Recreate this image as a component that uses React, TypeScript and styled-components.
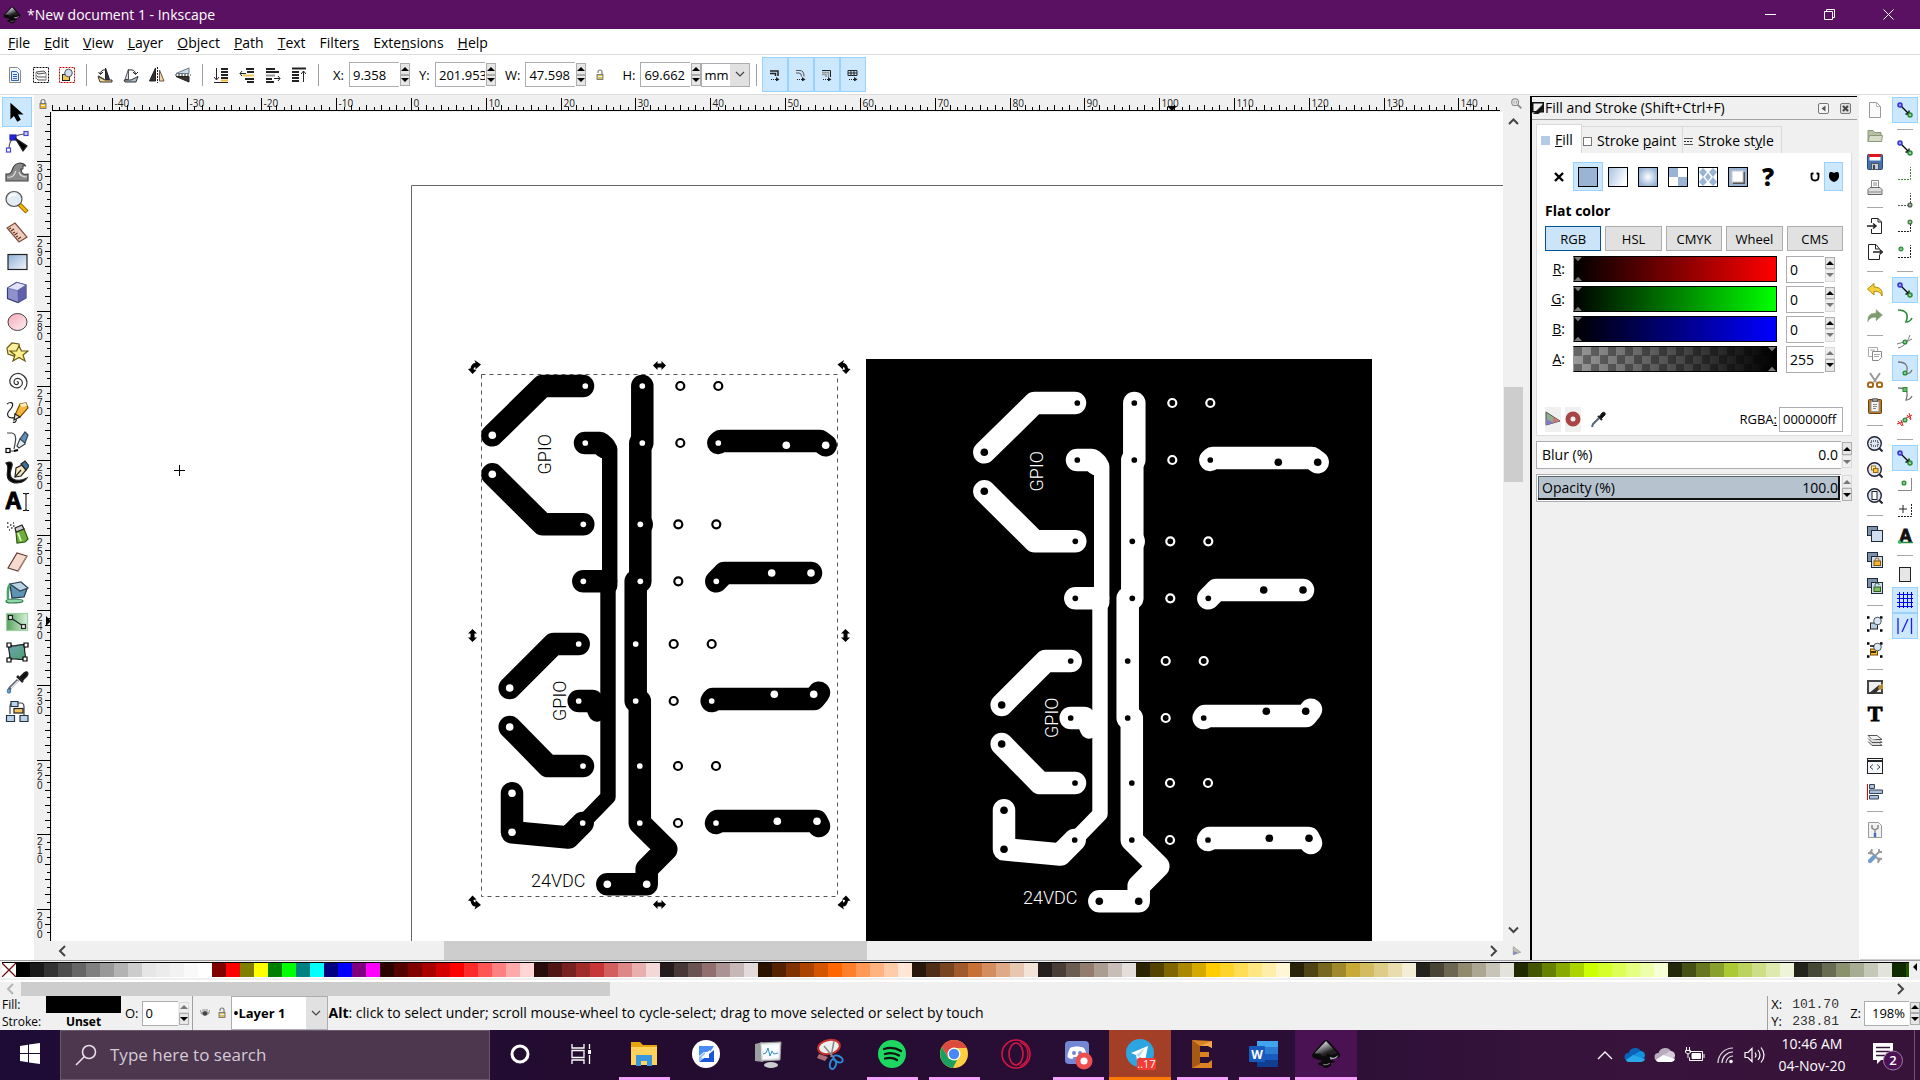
import React from "react";
import styled, { createGlobalStyle, css } from "styled-components";

const Global = createGlobalStyle`
  *, *::before, *::after { box-sizing: border-box; }
  html, body { margin: 0; padding: 0; }
  body { background: #f0f0f0; color: #000; font: 14px/18px "Open Sans", "Noto Sans", sans-serif; overflow: hidden; }
  button, input, select { font: inherit; color: inherit; margin: 0; padding: 0; border: 0; border-radius: 0; background: none; outline: none; }
  svg { display: block; flex: none; }
`;

/* ---------- shared pieces ---------- */

const Shell = styled.div`
  display: flex;
  flex-direction: column;
  height: 100vh;
`;

const IconButton = styled.button<{ $w?: number; $h?: number; $on?: boolean }>`
  display: flex;
  align-items: center;
  justify-content: center;
  flex: none;
  width: ${(p) => p.$w ?? 26}px;
  height: ${(p) => p.$h ?? 26}px;
  ${(p) => p.$on && css`background: #cce8ff; border: 1px solid #99d1ff;`}
`;

const VSep = styled.span`
  flex: none;
  width: 12px;
  height: 22px;
  background: linear-gradient(#a0a0a0, #a0a0a0) center / 1px 100% no-repeat;
`;

const HSep = styled.span`
  flex: none;
  width: 16px;
  height: 12px;
  background: linear-gradient(#a8a8a8, #a8a8a8) center / 100% 1px no-repeat;
`;

const Box = styled.span<{ $w?: number; $h: number }>`
  display: flex;
  gap: 1px;
  width: ${(p) => (p.$w ? p.$w + "px" : "auto")};
  height: ${(p) => p.$h}px;
`;

const TextInput = styled.input<{ $pad?: number }>`
  flex: 1;
  min-width: 0;
  width: 0;
  height: 100%;
  padding-left: ${(p) => p.$pad ?? 3}px;
  background: #fff;
  border: 1px solid #abadb3;
  border-right-width: 0;
`;

const HexInput = styled(TextInput)` border-right-width: 1px; `;

const Steps = styled.span`
  display: flex;
  flex-direction: column;
  flex: none;
  width: 10px;
  padding: 1px 0;
`;

const Step = styled.button<{ $dim?: boolean }>`
  flex: 1;
  display: flex;
  align-items: center;
  justify-content: center;
  border: 1px solid ${(p) => (p.$dim ? "#d9d9d9" : "#adadad")};
  background: ${(p) => (p.$dim ? "#efefef" : "#e6e6e6")};
  color: ${(p) => (p.$dim ? "#777" : "#000")};
`;

const Stepper = ({ upDim, downDim }: { upDim?: boolean; downDim?: boolean }) => (
  <Steps>
    <Step aria-label="Increase" $dim={upDim}>
      <svg width="8" height="4" viewBox="0 0 8 4"><path d="M0 4L4 0l4 4z" fill="currentColor" /></svg>
    </Step>
    <Step aria-label="Decrease" $dim={downDim}>
      <svg width="8" height="4" viewBox="0 0 8 4"><path d="M0 0h8L4 4z" fill="currentColor" /></svg>
    </Step>
  </Steps>
);

const Picker = styled.span<{ $w: number; $h: number; $arrow: number; $bold?: boolean }>`
  display: grid;
  grid-template-columns: 1fr ${(p) => p.$arrow}px;
  width: ${(p) => p.$w}px;
  height: ${(p) => p.$h}px;
  border: 1px solid #abadb3;
  background: linear-gradient(#e1e1e1, #e1e1e1) right / ${(p) => p.$arrow}px 100% no-repeat #fff;
  font-size: 13px;
  font-weight: ${(p) => (p.$bold ? 700 : 400)};
  select { grid-area: 1 / 1 / 2 / 3; appearance: none; padding-left: 2px; }
  svg { grid-area: 1 / 2; place-self: center; pointer-events: none; }
`;

const Chevron = ({ d = "M1 1l4 4 4-4", w = 10, h = 7, c = "#444", s = 1.2 }: { d?: string; w?: number; h?: number; c?: string; s?: number }) => (
  <svg width={w} height={h} viewBox={`0 0 ${w} ${h}`} fill="none" stroke={c} strokeWidth={s}><path d={d} /></svg>
);

const LEFT = "M7 1L2 6l5 5";
const RIGHT = "M2 1l5 5-5 5";

/* ---------- title and menu ---------- */

const TitleBar = styled.header`
  display: flex;
  align-items: center;
  flex: none;
  height: 29px;
  padding: 0 2px 0 3px;
  background: #5b1162;
  color: #fff;
  h1 { flex: 1; margin: 0 0 0 6px; font-size: 14px; line-height: 18px; font-weight: 400; }
`;

const MenuBar = styled.nav`
  display: flex;
  gap: 14px;
  flex: none;
  align-items: center;
  height: 26px;
  padding: 2px 0 0 8px;
  background: #fff;
  border-bottom: 1px solid #dcdcdc;
`;

const ToolBar = styled.div`
  display: flex;
  align-items: center;
  flex: none;
  height: 40px;
  padding-left: 2px;
  background: #fff;
  border-bottom: 1px solid #dcdcdc;
`;

const Field = styled.div`
  display: flex;
  align-items: center;
  gap: 5px;
  margin-left: 9px;
  font-size: 13px;
  label { min-width: 11px; }
`;

const InkLogo = ({ size, id }: { size: number; id: string }) => (
  <svg width={size} height={size} viewBox="0 0 32 32">
    <defs>
      <linearGradient id={id} x1="0" y1="0" x2="0.6" y2="1">
        <stop offset="0" stopColor="#fff" /><stop offset=".4" stopColor="#a4a7ac" /><stop offset=".8" stopColor="#222" />
      </linearGradient>
    </defs>
    <path d="M16 1c1.500 0 2.500.8 3.500 2l10 11c2.500 3 2 5-1 6-2 .8-6 .6-6 2 0 1.200 3 1 3 2s-2 1-4 1.500c-1 .5 1 2-1 3.500-2 1.200-3 2-5 2s-2-1.500-4-2.500c-1.500-.8-4-.5-4-2s4-1.500 4-3-6-1.500-8-3c-3-1.500-3-4-.5-6.500l10-11C14 1.800 14.800 1 16 1z" fill="#0b0b0b" />
    <path d="M16 2L4 15c3 2 5-1 7 2s4 1 6-.5 5 2 11-1.500z" fill={`url(#${id})`} />
    <path d="M20 19c3 2 6 1 9-2-1 4-5 4-8 5z" fill="#b5bcc4" />
    <path d="M13 27c2 1 4 .5 7-1" stroke="#999" fill="none" />
  </svg>
);

const menus: [string, string, string][] = [
  ["", "F", "ile"], ["", "E", "dit"], ["", "V", "iew"], ["", "L", "ayer"], ["", "O", "bject"],
  ["", "P", "ath"], ["", "T", "ext"], ["Filter", "s", ""], ["Exte", "n", "sions"], ["", "H", "elp"],
];

const WinButton = styled(IconButton)` width: 59px; height: 29px; `;

/* ---------- option bar icons ---------- */

const S = ({ children, s = 16, v = 16 }: { children: React.ReactNode; s?: number; v?: number }) => (
  <svg width={s} height={s} viewBox={`0 0 ${v} ${v}`} fill="none" stroke="#222" strokeWidth="1">{children}</svg>
);

const TurnLeft = () => (
  <S><path d="M8.500 12.500V1l4 11.500z" fill="#333" /><path d="M1.500 9l6 3.500" stroke="#333" /><path d="M1 9.500L8 13h7v2H3z" fill="#f6d98a" stroke="#333" /><path d="M9 3Q4 2 3.500 7M1.500 5l2 2.500L6 5" /></S>
);
const TurnRight = () => (
  <S><path d="M2 12.500L5.500 2v10.500z" fill="#d5dfe9" stroke="#555" /><path d="M1 13h7l7-3.500L13 15H2z" fill="#aebfce" stroke="#333" /><path d="M6 3q6-1 6.500 4M10 5l2.500 2.500L15 5" /></S>
);

const Lines = ({ kind }: { kind: number }) => (
  <S>
    {kind === 0 && <><path d="M3.500 1v11M1 10l2.500 3L6 10M1 15.500h14" /><path d="M8 2h7M8 5h7M8 8h7M8 11h7" strokeWidth="2" /><path d="M8 13.500h7" stroke="#f0b93a" strokeWidth="2" /></>}
    {kind === 1 && <><path d="M7 2h8M8 5h7M6 12h9M8 15h7" strokeWidth="2" /><path d="M4 8.500h11" stroke="#f0c35a" strokeWidth="2" /><path d="M1 6.500h6M3 4L1 6.500 3 9" /></>}
    {kind === 2 && <><path d="M1 2h9M1 5h13M1 12h6M1 15h8" strokeWidth="2" /><path d="M1 8.500h9" stroke="#999" strokeWidth="2" /><path d="M9 11.500h6M13 9l2 2.500L13 14" /></>}
    {kind === 3 && <><path d="M1 1.500h14" strokeWidth="2" /><path d="M1 5h7M1 8h7M1 11h7M1 14h7" strokeWidth="2" /><path d="M12.500 15V4M10 7l2.500-3L15 7" /></>}
  </S>
);

const PaperLines = () => (
  <S><path d="M2.500.5h8l3 3v12h-11z" fill="#f4f7fb" stroke="#888" /><path d="M4.500 4.500h5l2 2v7h-7z" fill="#dfe9f6" stroke="#3465a4" /><path d="M6 7.500h4M6 9.500h4M6 11.500h4" stroke="#3465a4" /></S>
);

const SelectAllLayers = () => (
  <S><rect x=".5" y=".5" width="15" height="15" stroke="#000" strokeDasharray="2 1" /><path d="M3 5l8-1 2 2-8 1zM3 8l2 2h8M3 11l2 2h8" stroke="#555" fill="#eee" /><path d="M3 5v7M13 6v7" stroke="#888" /></S>
);

const SelectTouch = () => (
  <S><rect x=".5" y=".5" width="15" height="15" stroke="#c00" strokeDasharray="2 1" /><rect x="3.500" y="7.500" width="7" height="6" fill="#f3c64c" /><circle cx="9.500" cy="6" r="3.800" fill="#cfdff0" stroke="#555" /></S>
);

const Padlock = ({ open, c = "#d8c25c" }: { open?: boolean; c?: string }) => (
  <svg width="12" height="12" viewBox="0 0 12 12"><path d={open ? "M4 4V3a2 2 0 0 1 4 0v3" : "M4 6V3.500a2 2 0 0 1 4 0V6"} fill="none" stroke="#777" strokeWidth="1.200" /><rect x="3" y="5.500" width="6" height="5" fill={c} stroke="#666" strokeWidth=".8" /><path d="M4 7.500h4" stroke="#eee" /></svg>
);

const Affect = ({ kind }: { kind: number }) => (
  <svg width="12" height="12" viewBox="0 0 12 12" fill="none" stroke="#222">
    {kind === 0 && <path d="M1 2h8v5M1 4.500h5.500V7" strokeWidth="1.500" />}
    {kind === 1 && <path d="M1 1.500h4q4 0 4 6M1 4h3q2.500 0 2.500 3.500" stroke="#555" />}
    {kind === 2 && <><path d="M1 1.500h8.500V8" /><path d="M1 3.500h6.500V8M1 5.500h4V8" stroke="#999" strokeWidth="1.500" /></>}
    {kind === 3 && <path d="M1 1.500h9v5H1zM1 4h9M4 1v6M7 1v6" />}
    <path d="M2 10.500h6" strokeDasharray="1 1" /><path d="M7 8l3.500 2.500L7 12.500z" fill="#222" stroke="none" />
  </svg>
);

/* ---------- tool box ---------- */

const ToolBox = styled.div`
  display: flex;
  flex-direction: column;
  align-items: center;
  flex: none;
  width: 34px;
  padding-top: 2px;
  background: #fff;
`;

const T = ({ children }: { children: React.ReactNode }) => (
  <svg width="24" height="24" viewBox="0 0 24 24" fill="none" stroke="#222" strokeWidth="1.200">{children}</svg>
);

const tools: [string, React.ReactNode][] = [
  ["Select", <T key="t"><path d="M6 4v14l3-3 3.500 6 2.500-1.500L12 14h5z" fill="#000" stroke="#000" /></T>],
  ["Edit nodes", <T key="t"><path d="M4 19C4 9 10 4 21 4" stroke="#555" /><rect x="1.500" y="18" width="4" height="4" fill="#fff" stroke="#44c" /><rect x="19" y="1.500" width="4" height="4" fill="#ccf" stroke="#44c" /><rect x="5" y="5" width="6" height="5" fill="#22e" stroke="#22a" /><path d="M10 8l12 8-4 5z" fill="#000" /></T>],
  ["Tweak", <T key="t"><path d="M1 21V14c5 1 6-3 7-6 2-5 9-7 13-2-2-1-4 0-3 2 0 1-1 1.500-2 1 0 5 3 6 7 5v7z" fill="#8a8a8a" stroke="#444" /><path d="M2 17c5 1 7-1 9-6M14 12c1 4 4 5 8 5" stroke="#ddd" /></T>],
  ["Zoom", <T key="t"><path d="M14 14l8 8" stroke="#8a5a00" strokeWidth="4.500" /><path d="M14.500 14.500l7 7" stroke="#f5b800" strokeWidth="2.500" /><ellipse cx="9" cy="9" rx="8" ry="7.500" fill="#e2ecf5" stroke="#555" /><path d="M4 8c1-3 4-4 7-3" stroke="#fff" strokeWidth="2" /></T>],
  ["Measure", <T key="t"><path d="M2 8l8-5 12 14-8 5z" fill="#f0cdbd" stroke="#7c4b3a" /><path d="M4 9l2-1M6 11l3-2M8 13l2-1M9.500 15l3-2M11 17l2-1M13 19l3-2" stroke="#5a2d1e" /></T>],
  ["Rectangle", <T key="t"><defs><linearGradient id="rg" x2="1" y2="1"><stop stopColor="#8fb0d6" /><stop offset="1" stopColor="#f2f7fc" /></linearGradient></defs><rect x="3" y="4.500" width="19" height="15" fill="url(#rg)" /></T>],
  ["3D box", <T key="t"><path d="M2.500 8l9-5.500L21 5v13l-8 4.500-10.500-4z" fill="#8f91cf" stroke="#333b78" /><path d="M2.500 8l10 2.500L21 5l-9-2.500z" fill="#e2e3f8" stroke="#555aa0" strokeWidth=".6" /><path d="M12.500 10.500L21 5v13l-8 4.500z" fill="#5d60a8" stroke="none" /></T>],
  ["Ellipse", <T key="t"><defs><linearGradient id="eg" x2="1" y2="1"><stop stopColor="#f7a8b8" /><stop offset="1" stopColor="#fdf0f2" /></linearGradient></defs><ellipse cx="12.500" cy="12" rx="9.500" ry="8.500" fill="url(#eg)" stroke="#444" strokeWidth="1" /></T>],
  ["Star", <T key="t"><path d="M2 8l5-5 7 1 1 7-6 5-6-2z" fill="#fbf0a0" stroke="#6b5a10" /><path d="M14 6l2.500 5H23l-5 4 2 6-6-3.500L8 21l2-6-5-4h6.500z" fill="#fdf08f" stroke="#6b5a10" /></T>],
  ["Spiral", <T key="t"><path d="M12 12c1-1 2 1 1 2s-4 1-4-2 3-4.500 6-3 3.500 6 0 8-9 0-10-4 2-9 7-9.500 10 4 10 9-1 5-3 7" stroke="#333" /></T>],
  ["Pencil", <T key="t"><path d="M2 4c4-3 7-1 5 3s-6 5-4 9 7 0 8 3-2 4-3 3" /><path d="M10 15l5-11 6-1 2 5-8 9-5 1z" fill="#f5b63a" stroke="#7a4a00" /><path d="M10 14l5 3-6 3z" fill="#fbe6c5" /><path d="M15 4l6-1 1 3-5 1z" fill="#fff4c2" stroke="none" /></T>],
  ["Bezier", <T key="t"><path d="M2 3h5c5 1 4 7 2 16M4 21h6" stroke="#444" /><rect x="1" y="18.500" width="4" height="4" fill="#fff" stroke="#000" /><path d="M9 21l4-1" stroke="#000" strokeWidth="2" /><path d="M12 16l3-7 4 1 1 4-6 4z" fill="#e2ecf2" stroke="#444" /><path d="M15 9l5-7 3 3-3 8z" fill="#5f90b5" stroke="#345" /></T>],
  ["Calligraphy", <T key="t"><path d="M1 3c4-2 7-1 6 3s-4 10 1 13 10 1 14-1c-3 5-13 7-18 2S6 8 1 3z" fill="#000" /><path d="M10 17l1-9 6-3 4 5-5 6z" fill="#f6e7bd" /><path d="M16 4l4-3 4 5-3 4z" fill="#3f709c" /><path d="M10 17l6-7" /></T>],
  ["Text", <svg key="t" width="24" height="24" viewBox="0 0 24 24"><text x="0" y="19" fontFamily="Liberation Sans, sans-serif" fontWeight="700" fontSize="23" fill="#000" stroke="#000" strokeWidth="1">A</text><path d="M18 3.500h2.500l.5 1 .5-1H24M21 4v16M18 20.500h2.500l.5-1 .5 1H24" stroke="#000" fill="none" /></svg>],
  ["Spray", <T key="t"><path d="M2 3h2M5 5h2M2 7h2M8 3h1M6 8h2M4 10h1M8 6h2" stroke="#333" strokeWidth="1.600" strokeDasharray="1.500 1" /><path d="M11 12l8-3 4 10-3 3-8 1z" fill="#6fae3c" stroke="#2b5a10" /><path d="M10 8l7-3 2 4-8 3z" fill="#ccc" /><path d="M13 13l3 8" stroke="#d6f2b8" strokeWidth="2" /></T>],
  ["Eraser", <T key="t"><path d="M3 18L12 3l10 3-9 15z" fill="#f6dace" stroke="#5e3a30" /><path d="M13 21l9-15" stroke="#a87" /></T>],
  ["Bucket", <T key="t"><path d="M1 21c0-2 5-2 8-2s9 0 9 2-9 2-12 2-5-1-5-2z" fill="#8fd6a8" stroke="#2c7a48" /><path d="M5 5l17 4-3 8-12 1z" fill="#5d93b3" stroke="#234" /><path d="M6 4C2 6 3 13 3 19" stroke="#49a26b" strokeWidth="2.500" /><path d="M5 4l11-2 7 6-8 3z" fill="#b9d5e4" stroke="#345" /></T>],
  ["Gradient", <T key="t"><defs><linearGradient id="gg" x2="1" y2="0"><stop stopColor="#57a35f" /><stop offset="1" stopColor="#d9f2db" /></linearGradient></defs><rect x="1.500" y="3.500" width="21" height="17" fill="url(#gg)" stroke="#9fcea4" /><path d="M6 8l12 8" /><rect x="3.500" y="5.500" width="4" height="4" fill="#e8e8e8" /><rect x="16.500" y="14.500" width="4" height="4" fill="#e8e8e8" /></T>],
  ["Mesh", <T key="t"><defs><linearGradient id="mg" x2="1" y2="1"><stop stopColor="#6f9fb3" /><stop offset="1" stopColor="#4ba26c" /></linearGradient></defs><path d="M4 5c5 3 10-2 17 0-4 5 1 9-1 14-6 2-10-2-16 1 3-6-2-9 0-15z" fill="url(#mg)" /><path d="M2 3h4v4H2zM19 3h4v4h-4zM2 18h4v4H2zM18 17h4v4h-4z" fill="#fff" stroke="#000" /></T>],
  ["Dropper", <T key="t"><path d="M14 8l5-5c3-3 5 0 3 3l-5 5z" fill="#111" /><path d="M12 6l6 6" strokeWidth="2.500" /><path d="M13 10l-8 8-1 2" stroke="#667" strokeWidth="3" /><path d="M13 11l-7 7" stroke="#e6eff6" /><ellipse cx="4" cy="21" rx="1.800" ry="2.300" fill="#5f9fd6" stroke="#246" strokeWidth=".6" /></T>],
  ["Connector", <T key="t"><path d="M5 14V6q0-3 4-3h7q3 0 3 4v8" stroke="#444" /><rect x="9" y="8.500" width="9" height="4.500" fill="#f5c35c" /><path d="M1.500 15.500h8v6h-8zM15 15.500h8v6h-8zM6 1.500h7v5H6z" fill="#bcd2ea" stroke="#234" /></T>],
];

/* ---------- editor area ---------- */

const Workspace = styled.main`
  display: flex;
  flex: 1;
  min-height: 0;
`;

const Editor = styled.section`
  display: grid;
  grid-template-columns: 18px minmax(0, 1fr) 27px;
  grid-template-rows: 17px minmax(0, 1fr) 19px;
  flex: 1;
  min-width: 0;
  background: #f0f0f0;
`;

const Corner = styled.div`
  display: flex;
  align-items: center;
  justify-content: center;
`;

const Canvas = styled.div`
  background: #fff;
  overflow: hidden;
  min-width: 0;
  svg { width: 100%; height: 100%; }
`;

const RulerBox = styled.div<{ $family: string }>`
  overflow: hidden;
  min-width: 0;
  min-height: 0;
  svg { width: 100%; height: 100%; }
  text { font-family: ${(p) => p.$family}, sans-serif; font-size: 10px; fill: #222; }
`;

const ScrollH = styled.div`
  display: flex;
  align-items: stretch;
  min-width: 0;
`;

const ScrollV = styled.div`
  display: flex;
  flex-direction: column;
  width: 19px;
  margin-left: 1px;
`;

const Gap = styled.span<{ $n: number }>` flex: ${(p) => p.$n} 1 0; `;
const Thumb = styled.span<{ $n: number }>` flex: ${(p) => p.$n} 1 0; background: #cdcdcd; `;

const UNIT = 74.82;

const TopRuler = () => {
  const ticks: React.ReactNode[] = [];
  for (let mm = -49; mm < 146; mm++) {
    const x = Math.floor(359.5 + (mm * UNIT) / 10) + 0.5;
    const major = mm % 10 === 0;
    ticks.push(<path key={mm} d={`M${x} 15V${major ? 3 : mm % 2 === 0 ? 10 : 12}`} stroke="#000" />);
    if (major) ticks.push(<text key={"t" + mm} x={x + 2} y="12">{mm}</text>);
  }
  return <svg>{ticks}<path d="M0 15.500h1448" stroke="#000" /><path d="M1115 11h10l-5 5z" fill="#000" /></svg>;
};

const SideRuler = () => {
  const ticks: React.ReactNode[] = [];
  for (let mm = 306; mm > 196; mm--) {
    const y = Math.floor(49.6 + ((300 - mm) * UNIT) / 10) + 0.5;
    const major = mm % 10 === 0;
    ticks.push(<path key={mm} d={`M16 ${y}H${major ? 3 : mm % 2 === 0 ? 11 : 13}`} stroke="#000" />);
    if (major) String(mm).split("").forEach((c, i) => ticks.push(<text key={mm + "-" + i} x="3" y={y + 10 + i * 9}>{c}</text>));
  }
  return <svg>{ticks}<path d="M16.500 0v2000" stroke="#000" /><path d="M12 504v10l5-5z" fill="#000" /></svg>;
};

const wide = [
  "M583 386H542.500L492.300 435.300", "M492.300 474.300L542.700 524.300H583.300",
  "M585 443H600L604.500 447", "M583.300 581.300H606", "M642.300 386V443", "M640.300 443V581.300", "M635.700 581.300V701", "M641.700 524.300V524.400",
  "M639.800 701V823L666.300 849.300L646.700 869V884.300H607.300",
  "M718.300 443L720.500 441H820L825.700 445.300", "M716.300 581.300L724.300 573H811",
  "M711.700 701L713 699H814L819 692.700", "M716 823L717.500 821H816.500L819 826",
  "M578.700 644H553.700L509.700 688", "M578.700 701H592.300", "M509.700 727L548 766H583",
  "M512 793.300V832.300L568.300 837.500L582.700 823",
];
const narrow = ["M609.700 449V586", "M608 581V797L582.700 823"];
const holes: number[][] = [
  [585.3, 386, 3], [492.3, 435.3, 4], [492.3, 474.3, 4], [583.3, 524.3, 3], [585.3, 443, 3], [583.3, 581.3, 3],
  [642.3, 386, 3], [642.3, 443, 3], [640.3, 524.3, 3], [640.3, 581.3, 3], [635.7, 644, 3], [635.7, 701, 3], [639.8, 766, 3], [639.8, 823, 3],
  [607.3, 884.3, 4], [646.7, 884.3, 4], [718.3, 443, 3], [786.3, 445.3, 4], [825.7, 445.3, 4], [716.3, 581.3, 3], [771.7, 573, 4], [811, 573, 4],
  [711.7, 701, 3], [774.3, 694.3, 4], [813.7, 694.3, 4], [716, 823, 3], [777.3, 821.3, 4], [817, 821.3, 4],
  [578.7, 644, 3], [509.7, 688, 4], [578.7, 701, 3], [509.7, 727, 4], [583, 766, 3], [512, 793.3, 4], [512, 832.3, 4], [582.7, 823, 3],
];
const rings: number[][] = [
  [680.3, 386], [718.3, 386], [680.3, 443], [678.3, 524.3], [716.3, 524.3], [678.3, 581.3],
  [673.7, 644], [711.7, 644], [673.7, 701], [678, 766], [716, 766], [678, 823],
];

const Board = ({ ink, paper, dx = 0, dy = 0 }: { ink: string; paper: string; dx?: number; dy?: number }) => (
  <g transform={`translate(${dx} ${dy})`}>
    <g fill="none" stroke={ink} strokeLinejoin="round" strokeLinecap="round">
      {wide.map((d) => <path key={d} d={d} strokeWidth="22.500" />)}
      {narrow.map((d) => <path key={d} d={d} strokeWidth="15.400" />)}
      <path d="M592 701L597 713" strokeWidth="17.500" />
      {rings.map(([x, y]) => <circle key={x + "," + y} cx={x} cy={y} r="4" strokeWidth="2.200" />)}
    </g>
    {holes.map(([x, y, r]) => <circle key={x + "," + y} cx={x} cy={y} r={r * 0.95} fill={paper} />)}
    <g fill={ink} fontFamily="Roboto, Lato, sans-serif" fontWeight="300" fontSize="18">
      <text transform="translate(550.500 474.500) rotate(-90)">GPIO</text>
      <text transform="translate(565.500 721) rotate(-90)">GPIO</text>
      <text x="531" y="886.500">24VDC</text>
    </g>
  </g>
);

const straight = "M-6.500 0L-2 -4.500V-2H2V-4.500L6.500 0L2 4.500V2H-2V4.500Z";
const bent = "M-2 7L-6.500 2L-4 1.500Q-3 -4 1 -4L0 -7L6.500 -2.500L1 2.500V0Q-1 0 -1 2.500L2 3Z";

const Drawing = () => (
  <svg>
    <g transform="translate(-52 -112)">
      <path d="M411.500 2000V185.500H4000" fill="none" stroke="#666" />
      <rect x="866" y="359" width="506" height="1200" fill="#000" />
      <Board ink="#000" paper="#fff" />
      <Board ink="#fff" paper="#000" dx={492} dy={17} />
      <rect x="481.500" y="374.500" width="356" height="522" fill="none" stroke="#555" strokeDasharray="4 4" />
      <g fill="#000">
        <path d={straight} transform="translate(659.500 365.500)" />
        <path d={straight} transform="translate(659.500 904.500)" />
        <path d={straight} transform="translate(472.500 635.500) rotate(90)" />
        <path d={straight} transform="translate(845.500 635.500) rotate(90)" />
        <path d={bent} transform="translate(474.500 367)" />
        <path d={bent} transform="translate(844 367) scale(-1 1)" />
        <path d={bent} transform="translate(474.500 902.500) scale(1 -1)" />
        <path d={bent} transform="translate(844 902.500) scale(-1 -1)" />
      </g>
      <path d="M174 470.500h11M179.500 465v11" stroke="#000" />
    </g>
  </svg>
);

/* ---------- fill and stroke dock ---------- */

const Dock = styled.aside`
  flex: none;
  width: 330px;
  border-left: 2px solid #000;
  border-right: 1px solid #fff;
  background: #f0f0f0;
  margin-top: 1px;
`;

const DockHead = styled.div`
  display: flex;
  align-items: center;
  gap: 1px;
  height: 24px;
  margin-right: 2px;
  border-top: 1px solid #000;
  border-bottom: 1px solid #a0a0a0;
  h2 { flex: 1; margin: 0; font-weight: 400; font-size: 14px; line-height: 18px; }
`;

const HeadButtons = styled.div`
  display: flex;
  gap: 11px;
  padding-right: 6px;
`;

const Tabs = styled.div`
  display: flex;
  align-items: flex-end;
  height: 33px;
  padding: 4px 0 0 4px;
`;

const Tab = styled.button<{ $w: number; $on?: boolean }>`
  display: flex;
  align-items: center;
  gap: 5px;
  width: ${(p) => p.$w}px;
  height: ${(p) => (p.$on ? 29 : 27)}px;
  padding: 2px 0 0 ${(p) => (p.$on ? 4 : 1)}px;
  border: 1px solid #d9d9d9;
  border-bottom: 0;
  ${(p) => !p.$on && css`border-left: 0;`}
  background: ${(p) => (p.$on ? "#fff" : "#f0f0f0")};
`;

const TabPage = styled.div`
  width: 316px;
  height: 283px;
  margin-left: 4px;
  padding: 9px 8px 0;
  border: 1px solid #dcdcdc;
  border-top: 0;
  background: #fff;
`;

const PaintRow = styled.div`
  display: flex;
  align-items: center;
  height: 29px;
`;

const Push = styled.span` flex: 1; `;

const Heading = styled.h3`
  margin: 11px 0 6px;
  font-size: 14px;
  line-height: 18px;
  font-weight: 700;
`;

const Modes = styled.div`
  display: flex;
  gap: 4px;
  margin-bottom: 3px;
`;

const Mode = styled.button<{ $on?: boolean }>`
  flex: 1;
  height: 25px;
  font-size: 13px;
  background: ${(p) => (p.$on ? "#cce4f7" : "#e1e1e1")};
  border: 1px solid ${(p) => (p.$on ? "#005499" : "#adadad")};
`;

const Channel = styled.div`
  display: flex;
  align-items: center;
  height: 30px;
  label { width: 20px; margin-right: 8px; text-align: right; }
`;

const Range = styled.input<{ $bg: string }>`
  appearance: none;
  width: 204px;
  height: 26px;
  margin-right: 9px;
  border: 1px solid #000;
  border-left-color: #999;
  background: ${(p) => p.$bg};
  &::-webkit-slider-thumb {
    appearance: none;
    width: 8px;
    height: 24px;
    background: #777;
    clip-path: polygon(0 0, 100% 0, 50% 18%, 50% 82%, 100% 100%, 0 100%, 50% 82%, 50% 18%);
  }
`;

const BottomRow = styled.div`
  display: flex;
  align-items: center;
  gap: 4px;
  height: 26px;
  margin-top: 32px;
`;

const Managed = styled(IconButton)` width: 16px; height: 25px; background: #f0f0f0; `;

const HexField = styled.div`
  display: flex;
  align-items: center;
  gap: 2px;
  font-size: 13px;
`;

const SpinSlider = styled.div`
  display: flex;
  gap: 1px;
  width: 316px;
  height: 28px;
  margin: 5px 0 0 4px;
`;

const SpinFace = styled.div<{ $fill?: boolean }>`
  display: flex;
  flex: 1;
  align-items: center;
  padding: 0 3px 0 5px;
  border: 1px solid #abadb3;
  border-right-width: 0;
  background: #fff;
  ${(p) => p.$fill && css`background: #b6c3ce; box-shadow: inset 0 0 0 1px #fff, inset -2px -2px 0 1px #111, inset 1px 1px 0 1px #566;`}
  input { flex: 1; min-width: 0; width: 0; text-align: right; }
`;

const PaintBox = ({ children }: { children?: React.ReactNode }) => (
  <svg width="20" height="20" viewBox="0 0 20 20"><rect x=".5" y=".5" width="19" height="19" fill="#fff" />{children}<rect x=".5" y=".5" width="19" height="19" fill="none" stroke="#000" /></svg>
);

const Unknown = styled.b` font: 900 24px/24px "Noto Sans", sans-serif; `;

/* ---------- command and snap bars ---------- */

const Bars = styled.div`
  display: flex;
  flex: none;
  width: 60px;
  background: #fff;
  border-bottom: 1px solid #d0d0d0;
`;

const Bar = styled.div`
  display: flex;
  flex-direction: column;
  align-items: center;
  width: 30px;
  padding-top: 2px;
`;

const Magnifier = ({ children }: { children: React.ReactNode }) => (
  <S><path d="M12 12l3.500 3.500" stroke="#223" strokeWidth="2" /><circle cx="7.500" cy="7.500" r="6.800" fill="#dde8f4" stroke="#223" strokeWidth="1.400" />{children}</S>
);
const Copies = ({ children }: { children?: React.ReactNode }) => (
  <S><rect x=".5" y=".5" width="10" height="9" fill="#7d93ab" stroke="#1d2a3a" /><rect x="4.500" y="4.500" width="11" height="11" fill="#cfdff0" stroke="#1d2a3a" />{children}</S>
);
const Corners = () => <path d="M0 1.500h2.500M13 1.500h2.500M0 14.500h2.500M13 14.500h2.500" stroke="#000" strokeWidth="2.500" />;

const commands: ([string, React.ReactNode] | null)[] = [
  ["New", <S key="i"><path d="M2.500.5h7l4 4v11h-11z" fill="#fafafa" stroke="#999" /><path d="M9.500.5v4h4" stroke="#bbb" /></S>],
  ["Open", <S key="i"><path d="M1 13.500V2.500h5l1.500 2H14v9z" fill="#b5c0a4" stroke="#8b9878" /><path d="M1 13.500l1.500-6h13l-1 6z" fill="#d5ddc6" stroke="#8b9878" /></S>],
  ["Save", <S key="i"><rect x=".5" y=".5" width="15" height="15" rx="1" fill="#4672b0" stroke="#234a82" /><rect x="2.500" y=".5" width="11" height="6" fill="#fff" stroke="none" /><rect x="2" y="0" width="12" height="3" fill="#e01818" stroke="none" /><rect x="4.500" y="9.500" width="7" height="6" fill="#c9ccd2" stroke="#555" /><rect x="6" y="11" width="2" height="4" fill="#345" stroke="none" /></S>],
  ["Print", <S key="i"><path d="M4.500 8V.5h7V8" fill="#fff" stroke="#888" /><path d="M1 9.500l2-2h10l2 2v5H1z" fill="#ddd" stroke="#666" /><path d="M2 12h12M6 3h4M6 5h4" stroke="#888" /></S>],
  null,
  ["Import", <S key="i"><path d="M4.500 5V.5H11l3.500 3.500v11.500h-10V11M11 .5V4h3.500" /><path d="M0 8h8M6 5.500L9 8l-3 2.500" strokeWidth="1.500" /></S>],
  ["Export", <S key="i"><path d="M12.500 5L9 .5H1.500v15h11V11M8.500.5V5h4" /><path d="M6 8h8M12.500 5.500L15.500 8l-3 2.500" strokeWidth="1.500" /></S>],
  null,
  ["Undo", <S key="i"><path d="M.5 7L7 1.500v3.500c6 0 9 3 8 9-1-3-3-5-8-4.500V13z" fill="#f5cf3a" stroke="#b08a10" /></S>],
  ["Redo", <S key="i"><path d="M15.500 7L9 1.500v3.500C3 5 0 8 1 14c1-3 3-5 8-4.500V13z" fill="#7f9a6c" stroke="#a3b79a" strokeDasharray="1 1" /></S>],
  null,
  ["Copy", <S key="i"><path d="M1.500 1.500h9v9h-9z" fill="#fff" stroke="#aaa" /><path d="M5.500 5.500h9v6l-3 3h-6z" fill="#fff" stroke="#888" /><path d="M7 8.500h6M7 10.500h5M3 4h5" stroke="#aaa" /></S>],
  ["Cut", <S key="i"><path d="M3 1l6 9M13 1L7 10" stroke="#999" strokeWidth="2" /><rect x="1" y="10.500" width="5" height="4.500" rx="1.500" stroke="#a8661a" strokeWidth="2" /><rect x="10" y="10.500" width="5" height="4.500" rx="1.500" stroke="#a8661a" strokeWidth="2" /></S>],
  ["Paste", <S key="i"><rect x="1.500" y="1.500" width="13" height="14" rx="1" fill="#b5782a" stroke="#6b430d" /><path d="M4 3.500h8v10H4z" fill="#f4f4f4" stroke="#999" /><path d="M5.500.8h5v2.500h-5z" fill="#aaa" stroke="#555" /><path d="M6 6.500h4M6 8.500h4M6 10.500h3" stroke="#888" /></S>],
  null,
  ["Zoom selection", <Magnifier key="i"><rect x="4" y="5" width="7" height="5" strokeDasharray="1 1" stroke="#000" /></Magnifier>],
  ["Zoom drawing", <Magnifier key="i"><rect x="4.500" y="4" width="4" height="4" fill="#fff2c4" stroke="#a70" /><rect x="6.500" y="6.500" width="4.500" height="4" fill="#f7c648" stroke="#960" /></Magnifier>],
  ["Zoom page", <Magnifier key="i"><rect x="5" y="3.500" width="5" height="8" fill="#fff" /></Magnifier>],
  null,
  ["Duplicate", <Copies key="i" />],
  ["Clone", <Copies key="i"><path d="M8 9V8a2 2 0 0 1 4 0v1" stroke="#a60" /><rect x="7" y="9" width="6.500" height="4.500" fill="#f7b733" stroke="#850" /></Copies>],
  ["Unlink clone", <Copies key="i"><path d="M8 8V7a2 2 0 0 1 4 0" stroke="#363" /><rect x="7" y="9" width="6.500" height="4.500" fill="#7cc256" stroke="#352" /></Copies>],
  null,
  ["Group", <S key="i"><Corners /><rect x="3.500" y="7" width="7" height="6" fill="#b9cde2" /><circle cx="10.500" cy="5" r="3.800" fill="#dce7f3" stroke="#456" /></S>],
  ["Ungroup", <S key="i"><Corners /><rect x="3.500" y="7" width="7" height="6" fill="#f7c22d" stroke="#740" /><circle cx="10.500" cy="5" r="3.800" fill="#dce7f3" stroke="#456" /><path d="M4 10h5M7 4h-4" stroke="#000" strokeWidth="1.500" /></S>],
  null,
  ["Fill and stroke", <S key="i"><rect x="1" y="1" width="14" height="12" fill="#eee" stroke="#444" strokeWidth="2" /><path d="M1 14L12 5l2 2-6 7z" fill="#333" stroke="none" /><path d="M11 7l5-4v6l-4 1z" fill="#b98a2a" stroke="none" /></S>],
  ["Text and font", <svg key="i" width="16" height="18" viewBox="0 0 16 18"><text x="8" y="16" textAnchor="middle" fontFamily="Liberation Serif, serif" fontWeight="700" fontSize="22" fill="#000" stroke="#000">T</text></svg>],
  ["Layers", <S key="i"><path d="M1 3.500h9l5 4H5z" fill="#f4f4f4" stroke="#555" /><path d="M1 6.500l4 4h10l-2-2M1 9.500l4 4h10l-2-2" fill="#ddd" stroke="#555" /></S>],
  ["XML editor", <S key="i"><rect x=".5" y=".5" width="15" height="15" fill="#f4f7fb" /><path d="M.5 3h15" strokeWidth="2" /><path d="M6 6.500L3 9l3 2.500M10 6.500L13 9l-3 2.500" stroke="#444" /></S>],
  ["Align", <S key="i"><path d="M.5 0v16" stroke="#d00" /><path d="M2.500.5h5v4h-5zM2.500 6h13v3.500h-13zM2.500 11.500h9v3.500h-9z" fill="#a9c1da" stroke="#345" /></S>],
  null,
  ["Preferences", <S key="i"><path d="M1.500.5h10l3 3v12h-13z" fill="#f2f2f2" stroke="#999" /><path d="M5 3v3l3 2 3-2V3M8 8v5" stroke="#888" strokeWidth="1.500" /><path d="M8 11v4" stroke="#3f74b8" strokeWidth="2.500" /></S>],
  ["Document properties", <S key="i"><path d="M3 3l10 10M1 5l3 .5L5 1M15 11l-3-.5-1 4.500" stroke="#999" strokeWidth="1.800" /><path d="M12 1v3h3M12 4L8 8" stroke="#999" strokeWidth="1.800" /><path d="M7 9l-4 4" stroke="#6f9bd1" strokeWidth="4" strokeLinecap="round" /></S>],
];

const snapMain = <S key="i"><path d="M4 4l8 8M12 8.500V12H8.500" stroke="#000" strokeWidth="1.300" /><circle cx="3" cy="3" r="2" fill="#99f" stroke="#33c" strokeWidth="1.500" /><circle cx="13" cy="13" r="2" fill="#9c9" stroke="#2a8a3a" strokeWidth="1.500" /></S>;
const Dot = ({ x, y, c = "#2a8a3a" }: { x: number; y: number; c?: string }) => <circle cx={x} cy={y} r="1.900" fill="#8c8" stroke={c} strokeWidth="1.300" />;

const snaps: ([string, React.ReactNode, boolean?] | null)[] = [
  ["Snap", snapMain, true],
  null,
  ["Snap bounding boxes", snapMain],
  ["Snap edges", <S key="i"><path d="M1 13.500h12.500V1" stroke="#3a8a3a" strokeDasharray="2 1" /></S>],
  ["Snap corners", <S key="i"><path d="M1 13.500h12.500V1" stroke="#555" strokeDasharray="2 1" /><Dot x={13} y={13} c="#555" /></S>],
  ["Snap edge midpoints", <S key="i"><path d="M1 13.500h12.500V6" strokeDasharray="2 1" /><Dot x={13} y={4} c="#474" /></S>],
  ["Snap centers", <S key="i"><path d="M1 13.500h12.500V1" strokeDasharray="2 1" /><Dot x={4} y={5} /></S>],
  null,
  ["Snap nodes", snapMain, true],
  ["Snap paths", <S key="i"><path d="M1 2c8 0 11 4 8 12 3 0 5-2 6-4" stroke="#2a8a3a" strokeWidth="1.600" /></S>],
  ["Snap intersections", <S key="i"><path d="M1 14c8-2 10-8 12-13M0 10c6-2 10-2 15-5" stroke="#777" /><Dot x={8} y={8} /></S>],
  ["Snap cusp nodes", <S key="i"><path d="M1 2c8 0 11 4 8 12 3 0 5-2 6-4" stroke="#777" strokeWidth="1.300" /><Dot x={8} y={13} /></S>, true],
  ["Snap smooth nodes", <S key="i"><path d="M1 2c8 0 11 4 8 12 3 0 5-2 6-4" stroke="#777" strokeWidth="1.300" /><rect x="6" y="1.500" width="4" height="4" fill="#6b6" stroke="#2a8a3a" /></S>],
  ["Snap midpoints", <S key="i"><path d="M1 9l4 5M4 8l2 6M0 12l6-2M10 3l4 5M12 1l2 6M9 6l6-3" stroke="#d22" /><Dot x={8} y={8} /></S>],
  null,
  ["Snap others", snapMain, true],
  ["Snap object centers", <S key="i"><path d="M1 14.500h13.500V2" stroke="#888" /><Dot x={7} y={7} /></S>],
  ["Snap rotation centers", <S key="i"><path d="M1 14.500h13.500V2" strokeDasharray="2 1" /><path d="M2 7h8M6 3v8" /></S>],
  ["Snap text baselines", <svg key="i" width="16" height="16" viewBox="0 0 16 16"><text x="2" y="14" fontFamily="Liberation Sans, sans-serif" fontWeight="700" fontSize="18" fill="#111" stroke="#111">A</text><path d="M2 14.500h14" stroke="#2a8a3a" strokeWidth="1.500" /><circle cx="2.500" cy="14" r="1.800" fill="#3b6" /></svg>],
  null,
  ["Snap page border", <S key="i"><rect x="2.500" y="1.500" width="11" height="14" fill="#e6e6e6" /></S>],
  ["Snap grids", <S key="i"><path d="M2.500 0v16M6.500 0v16M10.500 0v16M14.500 0v16M0 2.500h16M0 6.500h16M0 10.500h16M0 14.500h16" stroke="#00f" /></S>, true],
  ["Snap guides", <S key="i"><path d="M1 0v16M14.500 0v16M5 14L11 1" stroke="#1a1aff" strokeWidth="1.300" /></S>, true],
];

/* ---------- palette ---------- */

const palette = (
  "000000 1a1a1a 333333 4d4d4d 666666 808080 999999 b3b3b3 cccccc e6e6e6 ececec f2f2f2 f9f9f9 ffffff " +
  "800000 ff0000 808000 ffff00 008000 00ff00 008080 00ffff 000080 0000ff 800080 ff00ff " +
  "2b0000 550000 800000 aa0000 d40000 ff0000 ff2a2a ff5555 ff8080 ffaaaa ffd5d5 280b0b 501616 782121 a02c2c c83737 d35f5f de8787 e9afaf f4d7d7 241c1c 483737 6c5353 916f6f ac9393 c8b7b7 e3dbdb " +
  "2b1100 552200 803300 aa4400 d45500 ff6600 ff7f2a ff9955 ffb380 ffccaa ffe6d5 28170b 502d16 784421 a05a2c c87137 d38d5f deaa87 e9c6af f4e3d7 241f1c 483e37 6c5d53 917c6f ac9d93 c8beb7 e3dedb " +
  "2b2200 554400 806600 aa8800 d4aa00 ffcc00 ffd42a ffdd55 ffe680 ffeeaa fff6d5 28220b 504416 786721 a0892c c8ab37 d3bc5f decd87 e9ddaf f4eed7 24221c 484537 6c6753 918a6f aca793 c8c4b7 e3e2db " +
  "222b00 445500 668000 88aa00 aad400 ccff00 d4ff2a ddff55 e5ff80 eeffaa f6ffd5 23280b 445016 677821 89a02c abc837 bcd35f cdde87 dde9af eef4d7 22241c 454837 676c53 8a916f a7ac93 c4c8b7 e2e3db 112b00 225500"
).split(" ");

const PaletteRow = styled.div`
  display: flex;
  flex: none;
  height: 21px;
  padding: 2px 0 0 2px;
  border-top: 1px solid #a0a0a0;
  border-bottom: 1px solid #fff;
  background: #f0f0f0;
`;

const Swatches = styled.div`
  display: flex;
  flex: 1;
  min-width: 0;
  height: 15px;
  overflow: hidden;
  box-shadow: 0 -1px 0 #000;
  border-bottom: 1px solid #fff;
`;

const Swatch = styled.button<{ $c: string }>`
  flex: none;
  width: 14px;
  background: ${(p) => p.$c};
`;

const PaletteScroll = styled(ScrollH)`
  flex: none;
  height: 15px;
  border-top: 1px solid #fff;
`;

/* ---------- status bar ---------- */

const StatusBar = styled.footer`
  display: flex;
  align-items: center;
  flex: none;
  height: 34px;
`;

const StyleGrid = styled.div`
  display: grid;
  grid-template-columns: 44px 75px;
  grid-template-rows: 17px 17px;
  align-items: center;
  padding-left: 2px;
  font-size: 12px;
  line-height: 16px;
  b { text-align: center; }
`;

const FillChip = styled.span` height: 17px; background: #000; `;

const Small = styled.div<{ $ml?: number }>`
  display: flex;
  align-items: center;
  gap: 3px;
  margin-left: ${(p) => p.$ml ?? 4}px;
  font-size: 13px;
`;

const Divider = styled.span` width: 1px; height: 34px; background: #a0a0a0; margin: 0 3px; `;

const Hint = styled.p`
  flex: 1;
  margin: 0 0 0 1px;
  white-space: nowrap;
`;

const Coords = styled.dl`
  display: grid;
  grid-template-columns: 21px 50px;
  margin: 0;
  line-height: 17px;
  font-size: 13px;
  dt, dd { margin: 0; }
  dd { font-family: "Liberation Mono", monospace; color: #333; }
`;

/* ---------- task bar ---------- */

const TaskBar = styled.footer`
  display: flex;
  flex: none;
  height: 50px;
  background: linear-gradient(90deg, #1f0c36 0, #230c30 30%, #2a0e35 65%, #38143c 85%, #37133a 100%);
  color: #fff;
`;

const TaskSlot = styled.button<{ $w?: number; $bg?: string; $line?: string; $full?: boolean }>`
  display: flex;
  flex-direction: column;
  align-items: center;
  flex: none;
  width: ${(p) => p.$w ?? 62}px;
  height: 50px;
  background: ${(p) => p.$bg ?? "none"};
  svg { margin: auto; }
  &::after {
    content: "";
    flex: none;
    width: ${(p) => (p.$full ? "100%" : "51px")};
    height: 3px;
    background: ${(p) => p.$line ?? "transparent"};
  }
`;

const SearchBox = styled.label`
  display: flex;
  align-items: center;
  gap: 13px;
  flex: none;
  width: 430px;
  padding-left: 14px;
  background: #4c374e;
  border: 1px solid #6a576c;
  input { flex: 1; min-width: 0; font-size: 17px; line-height: 24px; color: #d5cad6; }
  input::placeholder { color: #d5cad6; opacity: 1; }
`;

const Tray = styled.div`
  display: flex;
  align-items: center;
  margin-left: auto;
`;

const Clock = styled.time`
  width: 84px;
  margin-right: 8px;
  text-align: center;
  line-height: 22px;
  white-space: pre-line;
`;

const Notices = styled(IconButton)` width: 52px; height: 50px; `;
const ShowDesktop = styled.button` width: 6px; height: 50px; border-left: 1px solid #6e5570; `;

const K = ({ children }: { children: React.ReactNode }) => <svg width="32" height="32" viewBox="0 0 32 32" fill="none">{children}</svg>;
const PINK = "#f4a1fb";

const tasks: { n: string; i: React.ReactNode; line?: string; bg?: string; full?: boolean }[] = [
  { n: "File Explorer", line: PINK, i: <K><path d="M3 4h9l3 3h14v20H3z" fill="#e9a50f" /><path d="M3 9h26v18H3z" fill="#ffd35c" /><path d="M8 17h16v11h-5v-5h-6v5H8z" fill="#3a96dd" /></K> },
  { n: "Browser", i: <K><circle cx="16" cy="16" r="14" fill="#fff" /><path d="M9 8h13l-6 6H9z" fill="#5c9bff" /><path d="M9 8v10l5-4h6l4-6H9z" fill="#4a8cf5" /><path d="M24 12v12H9l5-4h5v-4z" fill="#1b55d8" /><path d="M9 24v-5l6-5v5l-6 5z" fill="#8fbcff" /><path d="M12 20l8-7" stroke="#fff" strokeWidth="2" /></K> },
  { n: "System monitor", i: <K><path d="M3 6l8-2v20l-8-1z" fill="#9a9f9f" /><path d="M8 5l21-1-1 18-19 1z" fill="#dfe4e6" stroke="#999" /><path d="M10 7l17-1-1 14-15 1z" fill="#f7fbff" /><path d="M11 16l3-1 2-5 2 8 2-5 2 3 4-1" stroke="#2d8fc4" /><ellipse cx="19" cy="27" rx="7" ry="3" fill="#c9cece" /></K> },
  { n: "Snipping tool", i: <K><ellipse cx="15" cy="9" rx="11" ry="7" fill="#eee" stroke="#c8302c" strokeWidth="2" transform="rotate(-12 15 9)" /><path d="M5 16l9 3-3 4-8-3z" fill="#a9707b" /><path d="M20 3l-3 16M10 8l10 12" stroke="#888" strokeWidth="1.500" /><ellipse cx="24" cy="21" rx="5" ry="3" stroke="#2a8bd0" strokeWidth="2" transform="rotate(25 24 21)" /><ellipse cx="19" cy="26" rx="3" ry="5" stroke="#2a8bd0" strokeWidth="2" transform="rotate(15 19 26)" /></K> },
  { n: "Spotify", line: PINK, i: <K><circle cx="16" cy="16" r="14" fill="#1ed760" /><path d="M8 11c6-2 12-1 17 2M9 16c5-1.500 10-1 14 1.500M9 20.500c5-1.200 9-.5 12 1.500" stroke="#111" strokeWidth="2.300" strokeLinecap="round" /></K> },
  { n: "Chrome", line: PINK, i: <K><circle cx="16" cy="16" r="14" fill="#ffcd40" /><path d="M16 2a14 14 0 0 1 12.600 8H16l-6 9L4 9a14 14 0 0 1 12-7z" fill="#dd4b3e" /><path d="M4 9l7 12 8 1-4 8A14 14 0 0 1 4 9z" fill="#1aa05e" /><circle cx="16" cy="16" r="6.500" fill="#fff" /><circle cx="16" cy="16" r="5.200" fill="#4688f4" /></K> },
  { n: "Opera", i: <K><circle cx="16" cy="16" r="14" stroke="#d41645" strokeWidth="1.600" /><ellipse cx="16" cy="16" rx="7" ry="11" stroke="#d41645" strokeWidth="1.600" /><path d="M20 4a13 13 0 0 1 0 24" stroke="#d41645" strokeWidth="1.300" /></K> },
  { n: "Discord", line: PINK, i: <K><rect x="3" y="3" width="24" height="23" rx="4" fill="#7387d4" /><path d="M8 10c4-2 10-2 14 0 2 3 2.500 6 2.500 9-2 2-4 2-5 2l-1-2h-7l-1 2c-2 0-4-1-5-2 0-3 1-6 2.500-9z" fill="#fff" /><circle cx="12" cy="15" r="2" fill="#7387d4" /><circle cx="18" cy="15" r="2" fill="#7387d4" /><circle cx="22" cy="23" r="8.500" fill="#ec4f4f" /><circle cx="22" cy="23" r="3.600" fill="#fff" /></K> },
  { n: "Telegram", line: "#ff7a00", bg: "#a33f27", full: true, i: <K><circle cx="16" cy="15" r="14" fill="#2ca5e0" /><path d="M7 15l17-7-3 15-5-4-3 3-1-5z" fill="#fff" /><path d="M12 17l9-7-6 9z" fill="#b5d8ee" /><rect x="13" y="20" width="19" height="12" rx="2" fill="#f23c34" /><text x="22.500" y="30" textAnchor="middle" fontFamily="Open Sans, sans-serif" fontSize="11" fill="#fff">..17</text></K> },
  { n: "Fusion 360", line: PINK, i: <K><path d="M6 2l20 1v7l-4-2h-8v6h9v5h-9v6h8l4-3v8H6z" fill="#d98324" /><path d="M6 2l8 6v18l-8 4z" fill="#a55a14" /><path d="M14 8l12-5v7l-4-2z" fill="#f2a84a" /></K> },
  { n: "Word", line: PINK, i: <K><path d="M9 3h21v26H9z" fill="#2b7cd3" /><path d="M9 3h21v6H9z" fill="#41a5ee" /><path d="M9 22h21v7H9z" fill="#103f91" /><path d="M9 16h21v6H9z" fill="#185abd" /><rect x="1" y="8" width="16" height="16" rx="1" fill="#185abd" /><text x="9" y="20.500" textAnchor="middle" fontFamily="Open Sans, sans-serif" fontWeight="700" fontSize="12" fill="#fff">W</text></K> },
  { n: "Inkscape", line: PINK, bg: "#4b1253", full: true, i: <InkLogo size={30} id="inkTask" /> },
];

const TraySpot = styled(IconButton)` width: 30px; height: 50px; `;
const Cloud = ({ a, b, c }: { a: string; b: string; c: string }) => (
  <svg width="22" height="16" viewBox="0 0 22 16"><path d="M4.500 14a4 4 0 0 1 0-8 7 7 0 0 1 13-1 4.700 4.700 0 0 1 0 9z" fill={a} /><path d="M8 9l8-5a4.700 4.700 0 0 1 5 5l-4 3z" fill={b} /><path d="M2 13l7-5 12 4a4 4 0 0 1-3.500 3h-13A3 3 0 0 1 2 13z" fill={c} /></svg>
);

/* ---------- page ---------- */

const Num = ({ id, label, value }: { id: string; label: string; value: string }) => (
  <Field>
    <label htmlFor={id}>{label}</label>
    <Box $w={61} $h={25}><TextInput id={id} defaultValue={value} /><Stepper /></Box>
  </Field>
);

const channels = [
  { k: "R", v: 0, bg: "linear-gradient(90deg, #000, #f00)" },
  { k: "G", v: 0, bg: "linear-gradient(90deg, #000, #0f0)" },
  { k: "B", v: 0, bg: "linear-gradient(90deg, #000, #00f)" },
  { k: "A", v: 255, bg: "linear-gradient(90deg, transparent, #000), conic-gradient(#999 25%, #666 0 50%, #999 0 75%, #666 0) 0 0 / 17px 17px" },
];

export default function App() {
  return (
    <Shell>
      <Global />
      <TitleBar>
        <InkLogo size={18} id="inkTitle" />
        <h1>*New document 1 - Inkscape</h1>
        <WinButton aria-label="Minimize"><svg width="11" height="11"><path d="M0 5.500h11" stroke="#fff" /></svg></WinButton>
        <WinButton aria-label="Restore"><svg width="11" height="11" fill="none" stroke="#fff"><path d="M.5 2.500h8v8h-8zM2.500 2.500v-2h8v8h-2" /></svg></WinButton>
        <WinButton aria-label="Close"><svg width="11" height="11" stroke="#fff"><path d="M.5.5l10 10M10.500.5l-10 10" /></svg></WinButton>
      </TitleBar>

      <MenuBar>
        {menus.map(([a, m, b]) => <button key={a + m + b}>{a}<u>{m}</u>{b}</button>)}
      </MenuBar>

      <ToolBar>
        <IconButton aria-label="Select all"><PaperLines /></IconButton>
        <IconButton aria-label="Select all in layers"><SelectAllLayers /></IconButton>
        <IconButton aria-label="Deselect"><SelectTouch /></IconButton>
        <VSep />
        <IconButton aria-label="Rotate left"><TurnLeft /></IconButton>
        <IconButton aria-label="Rotate right"><TurnRight /></IconButton>
        <IconButton aria-label="Flip horizontal"><S><path d="M6.500 1v13H.5z" fill="#333" /><path d="M10.500 3l4.500 11h-4.500z" fill="#f2d9a0" stroke="#654" /><path d="M8.500 0v16" strokeDasharray="2 1" /></S></IconButton>
        <IconButton aria-label="Flip vertical"><S><path d="M14 1v5.500H1z" fill="#c9dbe8" stroke="#678" /><path d="M14 15V9.500H1z" fill="#333" /><path d="M0 8h16" strokeDasharray="2 1" /></S></IconButton>
        <VSep />
        {[0, 1, 2, 3].map((k) => <IconButton key={k} aria-label={["Lower to bottom", "Lower", "Raise", "Raise to top"][k]}><Lines kind={k} /></IconButton>)}
        <VSep />
        <Num id="x" label="X:" value="9.358" />
        <Num id="y" label="Y:" value="201.953" />
        <Num id="w" label="W:" value="47.598" />
        <IconButton $w={27} aria-label="Lock ratio"><Padlock open /></IconButton>
        <Num id="h" label="H:" value="69.662" />
        <Picker $w={49} $h={24} $arrow={19}>
          <select aria-label="Unit"><option>mm</option></select><Chevron />
        </Picker>
        <VSep />
        {[0, 1, 2, 3].map((k) => <IconButton key={k} $on $h={35} aria-label={["Scale stroke", "Scale corners", "Move gradients", "Move patterns"][k]}><Affect kind={k} /></IconButton>)}
      </ToolBar>

      <Workspace>
        <ToolBox>
          {tools.map(([n, icon], i) => <IconButton key={n} $w={30} $h={30} $on={i === 0} aria-label={n}>{icon}</IconButton>)}
        </ToolBox>

        <Editor>
          <Corner><Padlock c="#f0b62c" /></Corner>
          <RulerBox $family='"Open Sans"'><TopRuler /></RulerBox>
          <Corner><S s={11}><circle cx="6" cy="6" r="5" stroke="#888" strokeWidth="1.500" fill="#e4e4e4" /><path d="M4.500 4v4M8 4v4" stroke="#888" /><path d="M10 10l5 5" stroke="#888" strokeWidth="2.500" /></S></Corner>
          <RulerBox $family='"Liberation Sans"'><SideRuler /></RulerBox>
          <Canvas><Drawing /></Canvas>
          <ScrollV>
            <IconButton $w={19} $h={19} aria-label="Scroll up"><Chevron d="M1 6l4.500-4.500L10 6" w={11} h={8} s={2} /></IconButton>
            <Gap $n={256} /><Thumb $n={95} /><Gap $n={437} />
            <IconButton $w={19} $h={22} aria-label="Scroll down"><Chevron d="M1 1.500L5.500 6 10 1.500" w={11} h={8} s={2} /></IconButton>
          </ScrollV>
          <span />
          <ScrollH>
            <IconButton $w={20} $h={19} aria-label="Scroll left"><Chevron d={LEFT} w={9} h={12} s={2} /></IconButton>
            <Gap $n={372} /><Thumb $n={422} /><Gap $n={616} />
            <IconButton $w={20} $h={19} aria-label="Scroll right"><Chevron d={RIGHT} w={9} h={12} s={2} /></IconButton>
          </ScrollH>
          <Corner><S s={10}><path d="M2 1v13l12-4z" fill="#cbb" stroke="#7a9a7a" /><path d="M2 8v6l8-3z" fill="#88b" stroke="none" /></S></Corner>
        </Editor>

        <Dock>
          <DockHead>
            <S s={12}><rect x="1" y="1" width="14" height="12" fill="#eee" stroke="#111" strokeWidth="2" /><path d="M2 16L15 3v7l-7 6z" fill="#111" /></S>
            <h2>Fill and Stroke (Shift+Ctrl+F)</h2>
            <HeadButtons>
              <IconButton $w={11} $h={11} aria-label="Iconify"><svg width="11" height="11"><rect x=".5" y=".5" width="10" height="10" rx="1.500" fill="#f6f6f6" stroke="#777" /><path d="M7.500 2.500v6l-4-3z" fill="#555" /></svg></IconButton>
              <IconButton $w={11} $h={11} aria-label="Close dialog"><svg width="11" height="11"><rect x=".5" y=".5" width="10" height="10" rx="1.500" fill="#ddd" stroke="#777" /><path d="M3 3l5 5M8 3L3 8" stroke="#444" strokeWidth="2" /></svg></IconButton>
            </HeadButtons>
          </DockHead>
          <Tabs>
            <Tab $w={46} $on><svg width="9" height="9"><rect width="9" height="9" fill="#b4cbe6" /></svg><span><u>F</u>ill</span></Tab>
            <Tab $w={101}><svg width="9" height="9"><rect x=".5" y=".5" width="8" height="8" fill="#fff" stroke="#777" /></svg><span>Stroke <u>p</u>aint</span></Tab>
            <Tab $w={99}><svg width="9" height="9"><path d="M0 1.500h9M0 7.500h9" stroke="#555" /><path d="M0 4.500h9" stroke="#222" strokeDasharray="2 1" /></svg><span>Stroke st<u>y</u>le</span></Tab>
          </Tabs>
          <TabPage>
            <PaintRow>
              <IconButton $w={28} $h={29} aria-label="No paint"><svg width="10" height="10"><path d="M1 1l8 8M9 1L1 9" stroke="#000" strokeWidth="2.400" /></svg></IconButton>
              <IconButton $w={30} $h={29} $on aria-label="Flat color"><PaintBox><rect x="1" y="1" width="18" height="18" fill="#9ab4d6" /></PaintBox></IconButton>
              <IconButton $w={30} $h={29} aria-label="Linear gradient"><PaintBox><defs><linearGradient id="p1" x2="1" y2=".5"><stop stopColor="#a4bfe0" /><stop offset="1" stopColor="#fff" /></linearGradient></defs><rect width="20" height="20" fill="url(#p1)" /></PaintBox></IconButton>
              <IconButton $w={30} $h={29} aria-label="Radial gradient"><PaintBox><defs><radialGradient id="p2"><stop stopColor="#fff" /><stop offset="1" stopColor="#98b4d8" /></radialGradient></defs><rect width="20" height="20" fill="url(#p2)" /></PaintBox></IconButton>
              <IconButton $w={30} $h={29} aria-label="Mesh gradient"><PaintBox><path d="M0 0h10v20h10V10H0z" fill="#9ab4d6" /></PaintBox></IconButton>
              <IconButton $w={30} $h={29} aria-label="Pattern"><PaintBox><path d="M5 1l4 4-4 5-4-5zM15 1l4 4-4 5-4-5zM5 10l4 5-4 4-4-4zM15 10l4 5-4 4-4-4zM10 6l3 4-3 4-3-4z" fill="#9ab4d6" /></PaintBox></IconButton>
              <IconButton $w={30} $h={29} aria-label="Swatch"><PaintBox><rect width="20" height="20" fill="#9ab4d6" /><rect x="5" y="5" width="12" height="12" fill="#555" /><rect x="4" y="4" width="11" height="11" fill="#fff" stroke="#ccc" /></PaintBox></IconButton>
              <IconButton $w={30} $h={29} aria-label="Unset paint"><Unknown>?</Unknown></IconButton>
              <Push />
              <IconButton $w={19} $h={29} aria-label="Even-odd fill"><svg width="10" height="10"><path d="M1.500 1v4q0 3.500 3.500 3.500T8.500 5V1M1.500 1.500h2M6.500 1.500h2" fill="none" stroke="#000" strokeWidth="1.800" /></svg></IconButton>
              <IconButton $w={19} $h={29} $on aria-label="Nonzero fill"><svg width="10" height="10"><path d="M1 0h2l2 1 2-1h2l1 2v3q-1 4-5 5Q1 9 0 5V2z" fill="#000" /></svg></IconButton>
            </PaintRow>
            <Heading>Flat color</Heading>
            <Modes>{["RGB", "HSL", "CMYK", "Wheel", "CMS"].map((m, i) => <Mode key={m} $on={i === 0}>{m}</Mode>)}</Modes>
            {channels.map((c) => (
              <Channel key={c.k}>
                <label htmlFor={"n" + c.k}><u>{c.k}</u>:</label>
                <Range type="range" aria-label={c.k + " slider"} $bg={c.bg} max={255} defaultValue={c.v} />
                <Box $w={49} $h={27}><TextInput id={"n" + c.k} defaultValue={c.v} /><Stepper upDim={c.v > 0} downDim={c.v === 0} /></Box>
              </Channel>
            ))}
            <BottomRow>
              <Managed aria-label="Color managed"><S><path d="M1 1v13l14-4z" fill="#8fae8f" stroke="#555" /><path d="M1 8v6l8-2z" fill="#8878c0" stroke="none" /><path d="M8 6l7 4-7 2z" fill="#c87878" stroke="none" /></S></Managed>
              <Managed aria-label="Out of gamut"><S><circle cx="8" cy="8" r="5" stroke="#a84444" strokeWidth="5" /></S></Managed>
              <IconButton aria-label="Pick color"><S><path d="M9 6l3-4c2-2 4 0 3 2l-4 4z" fill="#111" /><path d="M8 5l4 4" strokeWidth="2" /><path d="M9 7l-6 6-1 3" stroke="#567" strokeWidth="2" /></S></IconButton>
              <Push />
              <HexField>
                <label htmlFor="rgba">RGBA<u>:</u></label>
                <Box $w={64} $h={25}><HexInput id="rgba" defaultValue="000000ff" /></Box>
              </HexField>
            </BottomRow>
          </TabPage>
          <SpinSlider>
            <SpinFace><label htmlFor="blur">Blur (%)</label><input id="blur" defaultValue="0.0" /></SpinFace>
            <Stepper downDim />
          </SpinSlider>
          <SpinSlider>
            <SpinFace $fill><label htmlFor="opacity">Opacity (%)</label><input id="opacity" defaultValue="100.0" /></SpinFace>
            <Stepper upDim />
          </SpinSlider>
        </Dock>

        <Bars>
          <Bar>{commands.map((c, i) => (c ? <IconButton key={i} aria-label={c[0]}>{c[1]}</IconButton> : <HSep key={i} />))}</Bar>
          <Bar>{snaps.map((c, i) => (c ? <IconButton key={i} $on={c[2]} aria-label={c[0]}>{c[1]}</IconButton> : <HSep key={i} />))}</Bar>
        </Bars>
      </Workspace>

      <PaletteRow>
        <Swatches>
          <Swatch $c="#fff" aria-label="None"><svg width="14" height="14"><path d="M0 0l14 14M14 0L0 14" stroke="#701010" strokeWidth="1.300" /></svg></Swatch>
          {palette.map((c, i) => <Swatch key={i} $c={"#" + c} aria-label={"#" + c} />)}
        </Swatches>
        <IconButton $w={11} $h={8} aria-label="Palette menu"><svg width="4" height="8"><path d="M4 0v8L0 4z" fill="#000" /></svg></IconButton>
      </PaletteRow>
      <PaletteScroll>
        <IconButton $w={21} $h={14} aria-label="Scroll palette left"><Chevron d={LEFT} w={9} h={12} c="#b5b5b5" s={2} /></IconButton>
        <Thumb $n={589} /><Gap $n={1270} />
        <IconButton $w={40} $h={14} aria-label="Scroll palette right"><Chevron d={RIGHT} w={9} h={12} s={2} /></IconButton>
      </PaletteScroll>

      <StatusBar>
        <StyleGrid><span>Fill:</span><FillChip /><span>Stroke:</span><b>Unset</b></StyleGrid>
        <Small><label htmlFor="o">O:</label><Box $w={47} $h={25}><TextInput id="o" defaultValue="0" /><Stepper upDim /></Box></Small>
        <Divider />
        <IconButton $w={18} aria-label="Layer visibility"><svg width="10" height="9" viewBox="0 0 10 9"><path d="M0 4q5-4 10 0-5 5-10 0z" fill="#999" /><circle cx="5" cy="4.500" r="2.200" fill="#444" /><path d="M1 3L0 1M3 2V0M5 2V0M7 2V0M9 3l1-2" stroke="#777" strokeWidth=".8" /></svg></IconButton>
        <IconButton $w={17} aria-label="Layer lock"><Padlock open /></IconButton>
        <Picker $w={97} $h={34} $arrow={21} $bold>
          <select aria-label="Current layer"><option>•Layer 1</option></select><Chevron />
        </Picker>
        <Hint><b>Alt</b>: click to select under; scroll mouse-wheel to cycle-select; drag to move selected or select by touch</Hint>
        <Divider />
        <Coords><dt>X:</dt><dd>101.70</dd><dt>Y:</dt><dd>238.81</dd></Coords>
        <Small $ml={8}><label htmlFor="z">Z:</label><Box $w={56} $h={25}><TextInput id="z" $pad={7} defaultValue="198%" /><Stepper /></Box></Small>
      </StatusBar>

      <TaskBar>
        <TaskSlot $w={60} aria-label="Start"><svg width="20" height="21" viewBox="0 0 20 21" fill="#fff"><path d="M0 3l8-1.200V10H0zM9 1.600L20 0v10H9zM0 11h8v8.200L0 18zM9 11h11v10L9 19.400z" /></svg></TaskSlot>
        <SearchBox>
          <svg width="22" height="22" viewBox="0 0 22 22" fill="none" stroke="#e6dfe7" strokeWidth="1.600"><circle cx="14" cy="8" r="6.500" /><path d="M9.500 12.500L1 21" /></svg>
          <input placeholder="Type here to search" aria-label="Type here to search" />
        </SearchBox>
        <TaskSlot $w={60} aria-label="Cortana"><svg width="20" height="20"><circle cx="10" cy="10" r="8" fill="none" stroke="#fff" strokeWidth="3" /></svg></TaskSlot>
        <TaskSlot $w={63} aria-label="Task view"><svg width="21" height="20" fill="none" stroke="#fff" strokeWidth="1.300"><path d="M1 0v4h12V0M1 6.500h12v7H1zM1 20v-4h12v4M18.500 0v5M18.500 11v9" /><path d="M18.500 6v4" strokeWidth="3" /></svg></TaskSlot>
        {tasks.map((t) => <TaskSlot key={t.n} aria-label={t.n} $line={t.line} $bg={t.bg} $full={t.full}>{t.i}</TaskSlot>)}
        <Tray>
          <TraySpot aria-label="Hidden icons"><Chevron d="M1 9l7-7 7 7" w={16} h={11} c="#fff" s={1.4} /></TraySpot>
          <TraySpot aria-label="OneDrive"><Cloud a="#0a64b8" b="#1490df" c="#28a8ea" /></TraySpot>
          <TraySpot aria-label="OneDrive personal"><Cloud a="#b9adbd" b="#d5ccd8" c="#fff" /></TraySpot>
          <TraySpot aria-label="Battery"><svg width="20" height="16" fill="none" stroke="#fff"><path d="M4.500 4.500h13v9h-13v-3" /><path d="M7 6.500h8.500v5H7z" fill="#fff" /><path d="M19 7v4M1.500 0v3M4.500 0v3M.5 3.500h5v2q-2.500 3-5 0zM3 7v4" /></svg></TraySpot>
          <TraySpot aria-label="Network"><svg width="17" height="17" fill="none" stroke="#fff" strokeWidth="1.200"><path d="M1 16A15 15 0 0 1 16 1M5 16A11 11 0 0 1 16 5M9 16a7 7 0 0 1 7-7" opacity=".85" /><circle cx="14" cy="14.500" r="1.800" fill="#fff" stroke="none" /></svg></TraySpot>
          <TraySpot aria-label="Volume"><svg width="22" height="18" fill="none" stroke="#fff" strokeWidth="1.200"><path d="M1 6.500h3l4-4v13l-4-4H1zM11 6.500q2 2.500 0 5M14 4q4 5 0 10M17 1.500q6 7.500 0 15" /></svg></TraySpot>
          <Clock>{"10:46 AM\n04-Nov-20"}</Clock>
          <Notices aria-label="Notifications, 2 new">
            <svg width="32" height="32" viewBox="0 0 32 32"><path d="M1 4h20v17H9l-4 4v-4H1z" fill="#fff" /><path d="M4 8.500h14M4 12.500h14M4 16.500h9" stroke="#38143c" strokeWidth="1.500" /><circle cx="21" cy="21.500" r="9.500" fill="#4b1253" stroke="#9a7ba0" /><text x="21" y="26" textAnchor="middle" fontFamily="Open Sans, sans-serif" fontWeight="600" fontSize="13" fill="#fff">2</text></svg>
          </Notices>
          <ShowDesktop aria-label="Show desktop" />
        </Tray>
      </TaskBar>
    </Shell>
  );
}
